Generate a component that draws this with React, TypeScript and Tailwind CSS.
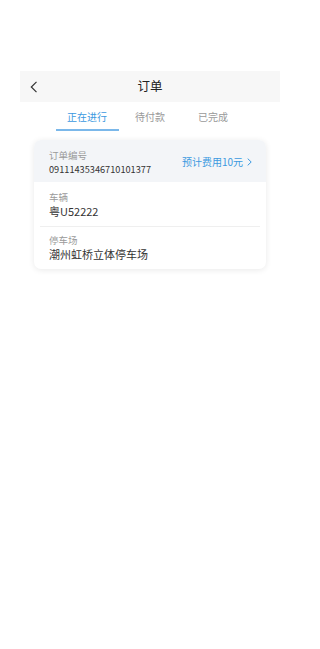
import { useState } from "react";

const tabs = ["正在进行", "待付款", "已完成"];

const font = "[font-family:'Noto_Sans_CJK_SC','Noto_Sans',sans-serif]";

export default function App() {
  const [active, setActive] = useState(0);

  return (
    <div className={`min-h-[649px] w-[300px] bg-white ${font}`}>
      <div className="h-[71px]" />
      <div className="relative mx-5 flex h-[31px] items-center justify-center bg-[#f7f7f7]">
        <svg
          className="absolute left-[10px] top-[10px]"
          width="8"
          height="12"
          viewBox="0 0 8 12"
          fill="none"
        >
          <path d="M6.5 0.8 1.3 6l5.2 5.2" stroke="#333" strokeWidth="1.2" />
        </svg>
        <span className="text-[12.5px] leading-none text-[#222]">订单</span>
      </div>

      <div className="flex justify-center pt-[8px]">
        {tabs.map((t, i) => (
          <button
            key={t}
            onClick={() => setActive(i)}
            className="flex w-[63px] flex-col items-center"
          >
            <span
              className={`text-[10px] leading-[14px] ${
                i === active ? "text-[#3b99e0]" : "text-[#9a9a9a]"
              }`}
            >
              {t}
            </span>
            <span
              className={`mt-[5px] h-[1.5px] w-full ${
                i === active ? "bg-[#7bb8ea]" : "bg-transparent"
              }`}
            />
          </button>
        ))}
      </div>

      <div className="mx-[34px] mt-[9px] overflow-hidden rounded-[7px] bg-white shadow-[0_1px_6px_rgba(0,0,0,0.09)]">
        <div className="flex items-center justify-between bg-[#f3f5f8] pl-[15px] pr-[14px] pb-[6px] pt-[8px]">
          <div className="flex flex-col">
            <span className="text-[9.5px] leading-[14px] text-[#9a9a9a]">订单编号</span>
            <span className="text-[9.2px] leading-[14px] text-[#333]">09111435346710101377</span>
          </div>
          <span className="flex items-center gap-[4px] text-[10px] leading-none text-[#3b99e0]">
            预计费用10元
            <svg width="5" height="8" viewBox="0 0 5 8" fill="none">
              <path d="M0.7 0.6 4.2 4 0.7 7.4" stroke="#3b99e0" strokeWidth="1" />
            </svg>
          </span>
        </div>
        <div className="px-[15px] pb-[8px] pt-[8px]">
          <div className="text-[9.5px] leading-[14px] text-[#9a9a9a]">车辆</div>
          <div className="text-[11px] leading-[14px] text-[#333]">粤U52222</div>
        </div>
        <div className="mx-[6px] h-px bg-[#efefef]" />
        <div className="px-[15px] pb-[8px] pt-[6px]">
          <div className="text-[9.5px] leading-[14px] text-[#9a9a9a]">停车场</div>
          <div className="text-[11px] leading-[14px] text-[#333]">潮州虹桥立体停车场</div>
        </div>
      </div>
    </div>
  );
}
